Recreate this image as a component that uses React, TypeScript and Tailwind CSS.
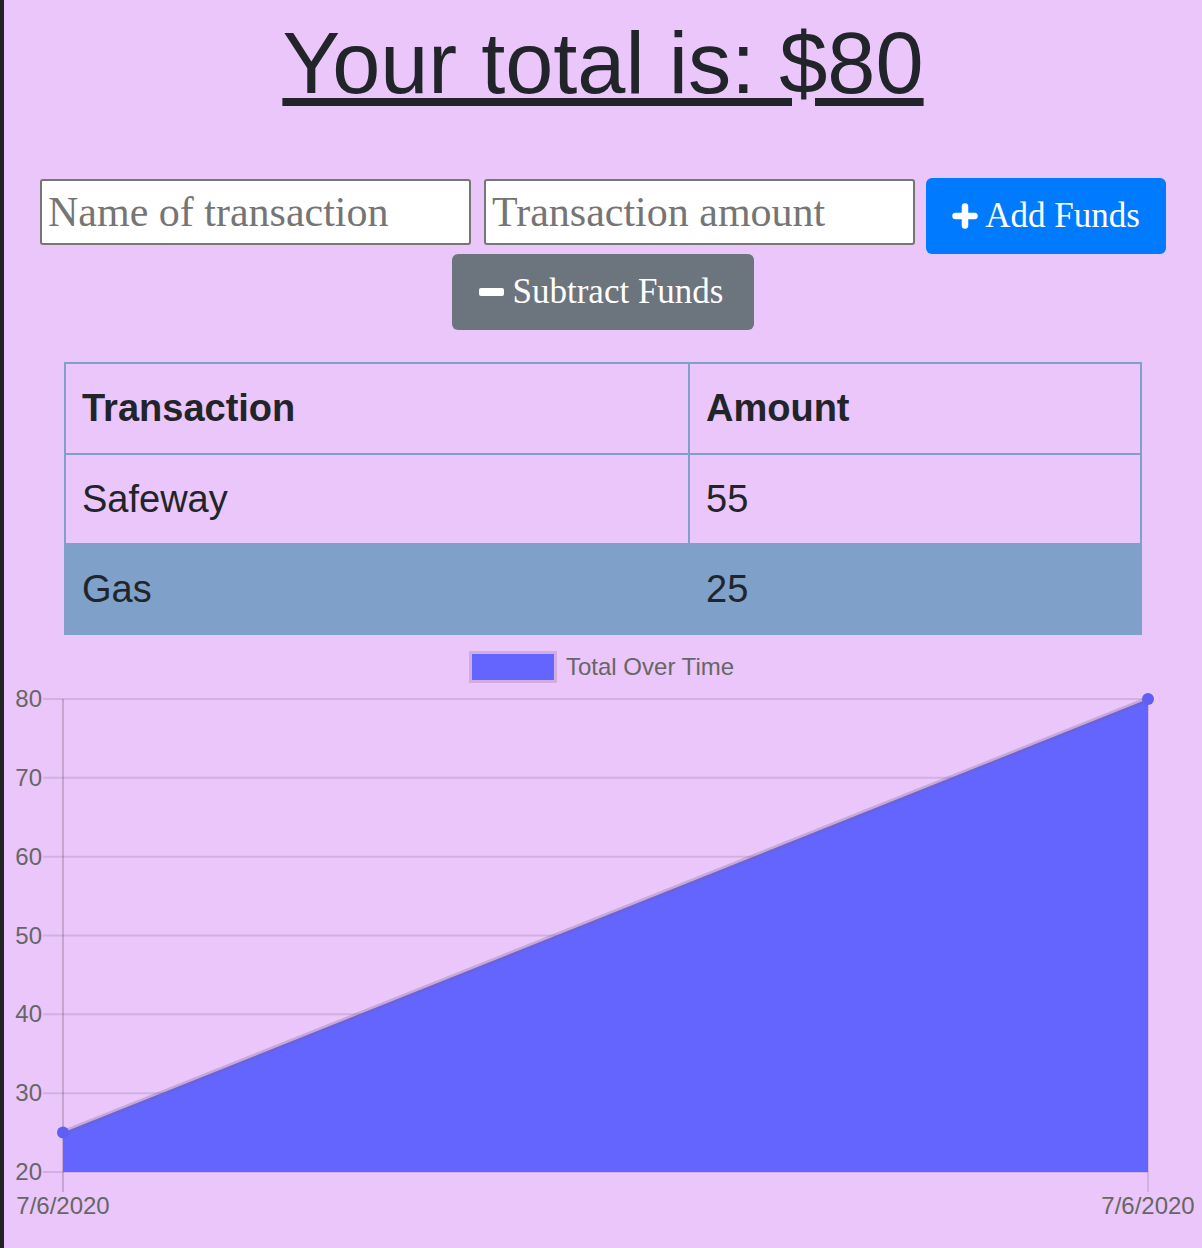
import React from 'react';

const rows = [
    { name: 'Safeway', value: 55 },
    { name: 'Gas', value: 25 },
];

// chart geometry, in svg coordinates (page x - 4, page y - 634)
const left = 59;
const right = 1144;
const top = 64;
const bottom = 537;
const step = (bottom - top) / 6;
const yFor = (v: number) => bottom - ((v - 20) / 60) * (bottom - top);

const PlusIcon = () => (
    <svg width="26" height="26" viewBox="0 0 26 26">
        <path d="M13 3.5v19M3.5 13h19" stroke="white" strokeWidth="6.5" strokeLinecap="round" />
    </svg>
);

const MinusIcon = () => (
    <svg width="25" height="8" viewBox="0 0 25 8">
        <rect x="0" y="0" width="25" height="8" rx="2" fill="white" />
    </svg>
);

const Chart = () => {
    const ticks = [80, 70, 60, 50, 40, 30, 20];
    const p1 = { x: left, y: yFor(25) };
    const p2 = { x: right, y: yFor(80) };
    return (
        <svg width="1198" height="614" viewBox="0 0 1198 614" className="block" style={{ fontFamily: '"Liberation Sans", Arial, sans-serif' }}>
            {/* legend */}
            <rect x="466.5" y="17.5" width="85" height="29" fill="#6464ff" stroke="#d2abe0" strokeWidth="3" />
            <text x="562" y="40" fontSize="24" fill="#666">Total Over Time</text>

            {/* grid */}
            {ticks.map((t, i) => (
                <g key={t}>
                    <line x1="39" x2={right} y1={top + i * step} y2={top + i * step} stroke="rgba(0,0,0,0.1)" strokeWidth="2" />
                    <text x="38" y={top + i * step + 8} fontSize="24" fill="#666" textAnchor="end">{t}</text>
                </g>
            ))}
            <line x1={left} x2={left} y1={top} y2="557" stroke="rgba(0,0,0,0.16)" strokeWidth="2" />
            <line x1={right} x2={right} y1={top} y2="557" stroke="rgba(0,0,0,0.1)" strokeWidth="2" />

            {/* area */}
            <polygon points={`${p1.x},${p1.y} ${p2.x},${p2.y} ${right},${bottom} ${left},${bottom}`} fill="#6464ff" />
            <line x1={p1.x} y1={p1.y} x2={p2.x} y2={p2.y} stroke="rgba(120,100,140,0.3)" strokeWidth="5" />
            <circle cx={p1.x} cy={p1.y} r="6" fill="#5f5ff4" />
            <circle cx={p2.x} cy={p2.y} r="6" fill="#5f5ff4" />

            {/* x labels */}
            <text x={left} y="579" fontSize="24" fill="#666" textAnchor="middle">7/6/2020</text>
            <text x={right} y="579" fontSize="24" fill="#666" textAnchor="middle">7/6/2020</text>
        </svg>
    );
};

const App = () => {
    return (
        <div className="flex min-h-screen">
            <div className="w-[4px] shrink-0 bg-[#232323]" />
            <main className="flex-1 bg-[#eac6fa] text-[#212529] font-['Liberation_Sans',Arial,sans-serif]">
                <h1 className="pt-[12px] text-center text-[86.5px] leading-[102px] underline">Your total is: $80</h1>

                <div className="mt-[64px] flex justify-center items-start font-['Liberation_Serif',Georgia,serif]">
                    <input
                        type="text"
                        placeholder="Name of transaction"
                        className="mt-[1px] w-[431px] h-[66px] border-2 border-[#767676] rounded-[3px] bg-white px-[6px] text-[42px] placeholder:text-[#757575] outline-none"
                    />
                    <input
                        type="number"
                        placeholder="Transaction amount"
                        className="mt-[1px] ml-[13px] w-[431px] h-[66px] border-2 border-[#767676] rounded-[3px] bg-white px-[6px] text-[42px] placeholder:text-[#757575] outline-none"
                    />
                    <button className="ml-[11px] w-[240px] h-[76px] rounded-[6px] bg-[#007bff] text-white text-[35px] flex items-center justify-center gap-[7px]">
                        <PlusIcon />
                        <span>Add Funds</span>
                    </button>
                </div>
                <div className="flex justify-center font-['Liberation_Serif',Georgia,serif]">
                    <button className="w-[302px] h-[76px] rounded-[6px] bg-[#6c757d] text-white text-[35px] flex items-center justify-center gap-[9px] pr-[4px]">
                        <MinusIcon />
                        <span>Subtract Funds</span>
                    </button>
                </div>

                <table className="mt-[32px] mx-auto w-[1078px] border-collapse text-[38px]">
                    <thead>
                        <tr>
                            <th className="w-[624px] h-[91px] border-2 border-[#7fa0c8] pl-[16px] text-left font-bold">Transaction</th>
                            <th className="h-[91px] border-2 border-[#7fa0c8] pl-[16px] text-left font-bold">Amount</th>
                        </tr>
                    </thead>
                    <tbody>
                        {rows.map((r, i) => (
                            <tr key={r.name} className={i % 2 === 1 ? 'bg-[#7fa0c8]' : ''}>
                                <td className="h-[90px] border-2 border-[#7fa0c8] pl-[16px]">{r.name}</td>
                                <td className="h-[90px] border-2 border-[#7fa0c8] pl-[16px]">{r.value}</td>
                            </tr>
                        ))}
                    </tbody>
                </table>

                <Chart />
            </main>
        </div>
    );
};

export default App;
